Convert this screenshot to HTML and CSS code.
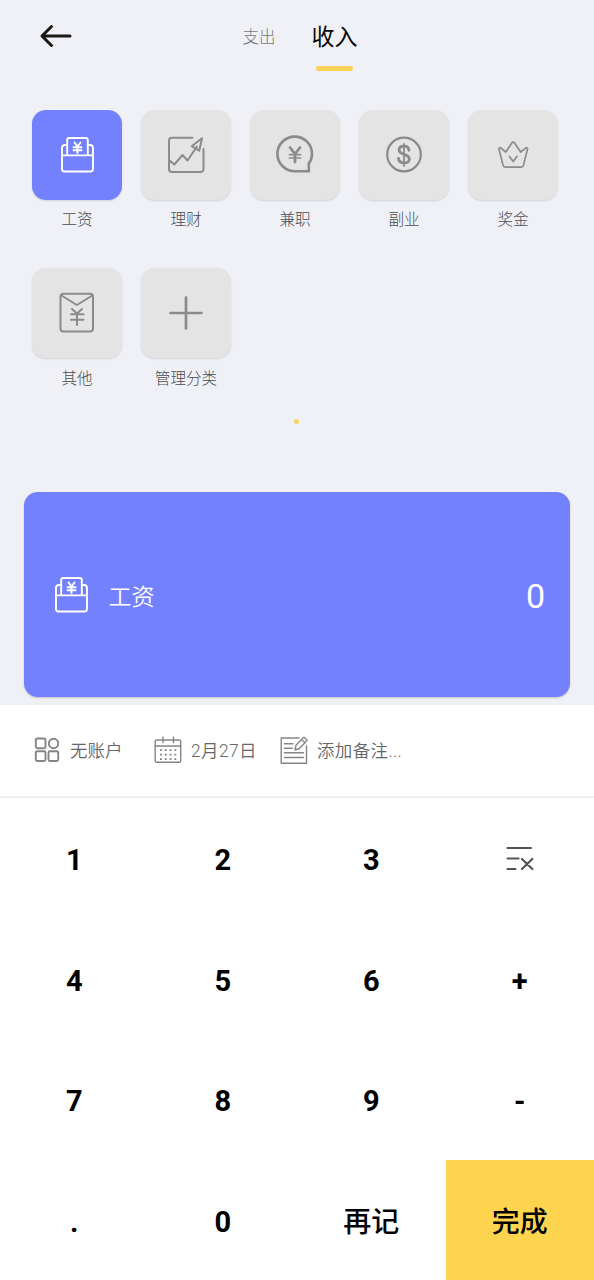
FILE: index.html
```html
<!DOCTYPE html>
<html lang="zh-CN">
<head>
<meta charset="utf-8">
<title>收入</title>
<link rel="stylesheet" href="styles.css">
</head>
<body>
<svg class="defs" aria-hidden="true">
  <symbol id="wallet" viewBox="29 27 33 36">
    <path d="M35.2 45.3V30a2 2 0 0 1 2-2h16.600a2 2 0 0 1 2 2v15.300M35.200 35h-2.200a3 3 0 0 0-3 3v21a2.500 2.500 0 0 0 2.500 2.500h26a2.500 2.500 0 0 0 2.500-2.500V38a3 3 0 0 0-3-3h-2.200M30 45.400h31" stroke-width="1.9"/>
    <path d="M42.500 32.500l3 4 3-4M41.500 37.200h8M41.500 40.200h8M45.500 37v6" stroke-width="1.9"/>
  </symbol>
</svg>
<main class="app">
  <header class="topbar">
    <svg class="back" viewBox="0 0 34 24"><path d="M12.500 2.500L3 12 12.500 21.500M3 12H31"/></svg>
    <nav class="tabs">
      <span class="tab">支出</span>
      <span class="tab tab-active">收入</span>
    </nav>
  </header>

  <section class="categories">
    <div class="category"><div class="tile tile-selected"><svg class="icon wallet"><use href="#wallet"/></svg></div><span class="label">工资</span></div>
    <div class="category"><div class="tile"><svg class="icon" viewBox="0 0 90 90"><path d="M51.500 27.700H31a3 3 0 0 0-3 3V59a3 3 0 0 0 3 3h28.500a3 3 0 0 0 3-3V39M28 50l5.300 4.500 8.200-9.500 5 5.500L56 36.500M61 28.200l-10.300 8 7.500 4.500z"/></svg></div><span class="label">理财</span></div>
    <div class="category"><div class="tile"><svg class="icon" viewBox="0 0 90 90"><path stroke-width="2.6" stroke-linejoin="miter" d="M58.800 61.200H45A17.300 17.300 0 1 1 62 44c0 4-1.200 7-3.200 9.500z"/><path stroke-width="2.800" d="M40 37.500l5 6.500 5-6.500M45 44v8"/><path stroke-width="1.700" d="M39.500 44.700h11M39.500 48h11"/></svg></div><span class="label">兼职</span></div>
    <div class="category"><div class="tile"><svg class="icon" viewBox="0 0 90 90"><circle cx="45" cy="44.500" r="16.800" stroke-width="2.200"/><path stroke-width="2.800" d="M50 40.300c-.4-2.700-2.200-4.100-5-4.100-2.900 0-4.900 1.500-4.900 3.900 0 2.600 2 3.400 4.900 4.200 3.200.9 5.300 1.900 5.300 4.600 0 2.600-2.200 4-5.300 4-3.300 0-5.200-1.500-5.500-4.400"/><path stroke-width="1.800" d="M45 33.800V56"/></svg></div><span class="label">副业</span></div>
    <div class="category"><div class="tile"><svg class="icon" viewBox="0 0 90 90"><path stroke-width="1.700" d="M44 32.800a1.500 1.500 0 0 1 2.400 0l6.300 9.200 5.300-4.200a1.100 1.100 0 0 1 1.600 1.100l-4.200 16.500a2.300 2.300 0 0 1-2.200 1.800H37.300a2.300 2.300 0 0 1-2.200-1.800L30.900 38.900a1.100 1.100 0 0 1 1.600-1.100L37.800 42zM41.500 46.500l3.700 5 3.700-5"/></svg></div><span class="label">奖金</span></div>
    <div class="category"><div class="tile"><svg class="icon" viewBox="0 0 90 90"><rect x="28.500" y="25.800" width="32.500" height="37.700" rx="3"/><path d="M29.500 27.500l15.400 9.500 15.400-9.500M40 41l5 4.500 5-4.500M39 46.200h12.500M39 51.700h12.500M45 46v11"/></svg></div><span class="label">其他</span></div>
    <div class="category"><div class="tile"><svg class="icon" viewBox="0 0 90 90"><path stroke-width="2.700" d="M45 29.700v30.800M29.500 45h31"/></svg></div><span class="label">管理分类</span></div>
  </section>
  <div class="pager"><i class="dot"></i></div>

  <section class="amount">
    <svg class="icon wallet"><use href="#wallet"/></svg>
    <span class="amount-name">工资</span>
    <span class="amount-value">0</span>
  </section>

  <section class="panel">
    <div class="details">
      <div class="detail account">
        <svg class="detail-icon" viewBox="0 0 28 28" stroke-width="1.900"><rect x="2.800" y="2.500" width="9.700" height="9.700" rx="1.500"/><circle cx="20.500" cy="7.500" r="4.700"/><rect x="2.800" y="15.300" width="9.700" height="9.700" rx="1.500"/><rect x="15.500" y="15.300" width="9.700" height="9.700" rx="1.500"/></svg>
        <span>无账户</span>
      </div>
      <div class="detail date">
        <svg class="detail-icon" viewBox="0 0 28 28" stroke-width="1.400"><rect x="1.200" y="4" width="25.500" height="22.200" rx="1.500"/><path d="M1.200 10h25.500M9 1v5.500M19.500 1v5.500"/><path stroke-width="1.900" stroke-dasharray="1.900 2.900" stroke-linecap="butt" d="M6 14.100h17M6 18.600h17M6 23.100h17"/></svg>
        <span>2月27日</span>
      </div>
      <div class="detail note">
        <svg class="detail-icon" viewBox="0 0 28 28" stroke-width="1.400"><path d="M19 2H1.200v25.300h25.300V10M4.500 7.700H13M4.500 12.300h8M4.500 16.800h19M4.500 21.500h19"/><path d="M15 14l1-4.800L23.200 1.700a1 1 0 0 1 1.400 0l2 1.900a1 1 0 0 1 0 1.400l-7.200 7.500zM21.500 3.500l3.400 3.200"/></svg>
        <span>添加备注...</span>
      </div>
    </div>
    <div class="keypad">
      <div class="key">1</div><div class="key">2</div><div class="key">3</div>
      <div class="key key-clear"><svg class="clear" viewBox="0 0 30 26"><path d="M2.500 2h23.500M2.500 12.500h11M2.500 23h8M17 13l10.300 10M27.300 13L17 23"/></svg></div>
      <div class="key">4</div><div class="key">5</div><div class="key">6</div><div class="key">+</div>
      <div class="key">7</div><div class="key">8</div><div class="key">9</div><div class="key">-</div>
      <div class="key">.</div><div class="key">0</div><div class="key key-text">再记</div><div class="key key-text key-done">完成</div>
    </div>
  </section>
</main>
</body>
</html>
```
FILE: styles.css
```css
* { box-sizing: border-box; }
body {
  margin: 0;
  font-family: Roboto, "Noto Sans CJK SC", sans-serif;
  background: #eff1f6;
}
.defs { display: block; width: 0; height: 0; }
.app {
  display: flex;
  flex-direction: column;
  width: 594px;
  height: 1280px;
  overflow: hidden;
}
svg {
  fill: none;
  stroke-linecap: round;
  stroke-linejoin: round;
}
.topbar {
  display: flex;
  height: 109.500px;
  padding-left: 39px;
}
.back {
  width: 34px;
  height: 24px;
  margin-top: 24px;
  stroke: #1b1915;
  stroke-width: 3;
}
.tabs {
  display: flex;
  gap: 36px;
  height: 72px;
  margin-left: 169.500px;
}
.tab {
  font-size: 16.500px;
  line-height: 75px;
  font-weight: 300;
  color: #77787c;
}
.tab-active {
  display: flex;
  flex-direction: column;
  align-items: center;
  font-size: 23px;
  font-weight: 400;
  color: #08080a;
}
.tab-active::after {
  content: "";
  flex: none;
  width: 37px;
  height: 5px;
  margin-top: -9px;
  border-radius: 2.500px;
  background: #fbd359;
}
.categories {
  display: grid;
  grid-template-columns: repeat(5, 90px);
  grid-auto-rows: 126px;
  gap: 32.500px 19px;
  padding-left: 32px;
}
.category {
  display: flex;
  flex-direction: column;
  align-items: center;
}
.tile {
  display: flex;
  align-items: center;
  justify-content: center;
  width: 90px;
  height: 90px;
  flex: none;
  border-radius: 14px;
  background: #e4e4e4;
  box-shadow: 0 1px 2px rgba(0, 0, 0, 0.13);
}
.tile-selected { background: #7481ff; }
.icon {
  width: 90px;
  height: 90px;
  stroke: #8b8b8b;
  stroke-width: 2;
}
.wallet {
  width: 33px;
  height: 36px;
  stroke: #fff;
}
.label {
  margin-top: 9.500px;
  font-size: 15.600px;
  line-height: 22px;
  font-weight: 300;
  color: #4c4d51;
  white-space: nowrap;
}
.pager {
  display: flex;
  justify-content: center;
  height: 98px;
  padding: 25px 1px 0 0;
}
.dot {
  width: 5px;
  height: 5px;
  border-radius: 50%;
  background: #fbd164;
}
.amount {
  display: flex;
  align-items: center;
  height: 205px;
  margin: 0 24px 8px;
  padding: 1px 25px 0 30.500px;
  border-radius: 14px;
  background: #7481ff;
  box-shadow: 0 1px 2px rgba(0, 0, 0, 0.2);
  color: #fff;
}
.amount-name {
  margin: -1px 0 0 21px;
  font-size: 23px;
  font-weight: 350;
}
.amount-value {
  margin: 2px 0 0 auto;
  font-size: 34px;
  font-weight: 400;
}
.panel {
  flex: 1;
  background: #fff;
}
.details {
  display: flex;
  height: 93px;
  padding: 0 0 2px 33px;
  border-bottom: 2px solid #eeeff1;
}
.detail {
  display: flex;
  align-items: center;
  gap: 9px;
  font-size: 17.500px;
  font-weight: 350;
  color: #67676a;
  white-space: nowrap;
}
.account { width: 121px; }
.date { width: 126px; }
.date, .note { letter-spacing: 0.350px; }
.detail-icon {
  flex: none;
  width: 28px;
  height: 28px;
  stroke: #858585;
}
.keypad {
  display: grid;
  grid-template-columns: repeat(4, 148.500px);
  grid-auto-rows: 120.500px;
}
.key {
  display: flex;
  align-items: center;
  justify-content: center;
  padding-top: 4px;
  font-size: 29px;
  font-weight: 700;
  color: #000;
}
.key-clear { padding-top: 1px; }
.key-text {
  padding-top: 0;
  font-size: 28px;
  font-weight: 500;
}
.key-done { background: #ffd54f; }
.clear {
  width: 30px;
  height: 26px;
  stroke: #555;
  stroke-width: 2.200;
}
```
